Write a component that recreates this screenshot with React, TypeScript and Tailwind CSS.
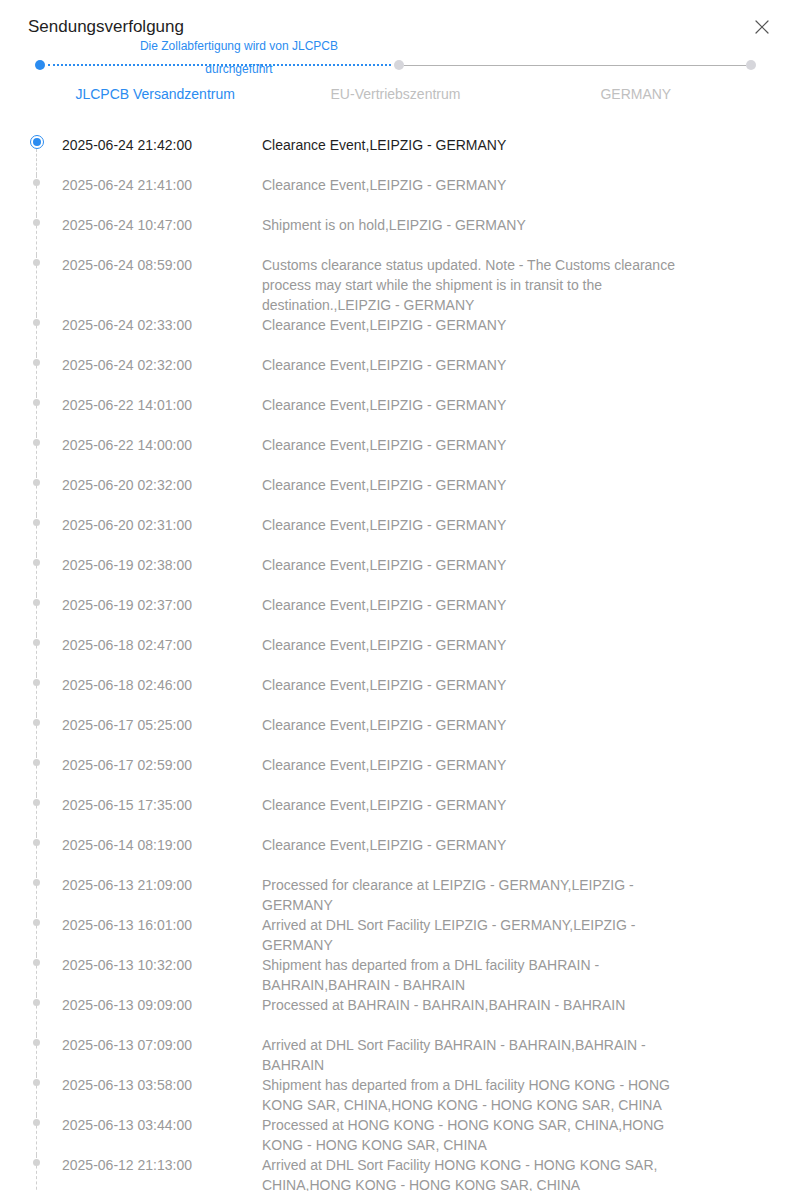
import { X } from 'lucide-react';

interface TrackEvent {
  time: string;
  text: string;
}

const events: TrackEvent[] = [
  { time: '2025-06-24 21:42:00', text: 'Clearance Event,LEIPZIG - GERMANY' },
  { time: '2025-06-24 21:41:00', text: 'Clearance Event,LEIPZIG - GERMANY' },
  { time: '2025-06-24 10:47:00', text: 'Shipment is on hold,LEIPZIG - GERMANY' },
  {
    time: '2025-06-24 08:59:00',
    text: 'Customs clearance status updated. Note - The Customs clearance process may start while the shipment is in transit to the destination.,LEIPZIG - GERMANY',
  },
  { time: '2025-06-24 02:33:00', text: 'Clearance Event,LEIPZIG - GERMANY' },
  { time: '2025-06-24 02:32:00', text: 'Clearance Event,LEIPZIG - GERMANY' },
  { time: '2025-06-22 14:01:00', text: 'Clearance Event,LEIPZIG - GERMANY' },
  { time: '2025-06-22 14:00:00', text: 'Clearance Event,LEIPZIG - GERMANY' },
  { time: '2025-06-20 02:32:00', text: 'Clearance Event,LEIPZIG - GERMANY' },
  { time: '2025-06-20 02:31:00', text: 'Clearance Event,LEIPZIG - GERMANY' },
  { time: '2025-06-19 02:38:00', text: 'Clearance Event,LEIPZIG - GERMANY' },
  { time: '2025-06-19 02:37:00', text: 'Clearance Event,LEIPZIG - GERMANY' },
  { time: '2025-06-18 02:47:00', text: 'Clearance Event,LEIPZIG - GERMANY' },
  { time: '2025-06-18 02:46:00', text: 'Clearance Event,LEIPZIG - GERMANY' },
  { time: '2025-06-17 05:25:00', text: 'Clearance Event,LEIPZIG - GERMANY' },
  { time: '2025-06-17 02:59:00', text: 'Clearance Event,LEIPZIG - GERMANY' },
  { time: '2025-06-15 17:35:00', text: 'Clearance Event,LEIPZIG - GERMANY' },
  { time: '2025-06-14 08:19:00', text: 'Clearance Event,LEIPZIG - GERMANY' },
  { time: '2025-06-13 21:09:00', text: 'Processed for clearance at LEIPZIG - GERMANY,LEIPZIG - GERMANY' },
  { time: '2025-06-13 16:01:00', text: 'Arrived at DHL Sort Facility LEIPZIG - GERMANY,LEIPZIG - GERMANY' },
  {
    time: '2025-06-13 10:32:00',
    text: 'Shipment has departed from a DHL facility BAHRAIN - BAHRAIN,BAHRAIN - BAHRAIN',
  },
  { time: '2025-06-13 09:09:00', text: 'Processed at BAHRAIN - BAHRAIN,BAHRAIN - BAHRAIN' },
  { time: '2025-06-13 07:09:00', text: 'Arrived at DHL Sort Facility BAHRAIN - BAHRAIN,BAHRAIN - BAHRAIN' },
  {
    time: '2025-06-13 03:58:00',
    text: 'Shipment has departed from a DHL facility HONG KONG - HONG KONG SAR, CHINA,HONG KONG - HONG KONG SAR, CHINA',
  },
  {
    time: '2025-06-13 03:44:00',
    text: 'Processed at HONG KONG - HONG KONG SAR, CHINA,HONG KONG - HONG KONG SAR, CHINA',
  },
  {
    time: '2025-06-12 21:13:00',
    text: 'Arrived at DHL Sort Facility HONG KONG - HONG KONG SAR, CHINA,HONG KONG - HONG KONG SAR, CHINA',
  },
];

const steps = ['JLCPCB Versandzentrum', 'EU-Vertriebszentrum', 'GERMANY'];

export default function App() {
  return (
    <div className="min-h-screen bg-white px-[28px] pt-[15px] font-['Liberation_Sans',Arial,sans-serif]">
      {/* Header */}
      <div className="flex items-center justify-between h-6">
        <h1 className="text-[17px] leading-6 text-[#1f1f1f]">Sendungsverfolgung</h1>
        <button className="-mr-[10px] text-[#555]">
          <X size={24} strokeWidth={1.2} />
        </button>
      </div>

      {/* Steps */}
      <div className="ml-[7px] w-[721px] mt-[21px]">
        <div className="relative flex items-center h-[10px]">
          <div className="w-[10px] h-[10px] rounded-full bg-[#2b8cf0] shrink-0" />
          <div className="flex-1 border-t-2 border-dotted border-[#2b8cf0] mx-[3px]" />
          <div className="w-[10px] h-[10px] rounded-full bg-[#d6d6db] shrink-0" />
          <div className="flex-1 h-px bg-[#b3b3b3]" />
          <div className="w-[10px] h-[10px] rounded-full bg-[#d6d6db] shrink-0" />
          <div className="absolute left-[204px] top-[-25px] -translate-x-1/2 whitespace-nowrap text-center text-[12px] leading-[23px] text-[#2b8cf0]">
            Die Zollabfertigung wird von JLCPCB
            <br />
            durchgeführt
          </div>
        </div>
        <div className="grid grid-cols-3 mt-[14px] text-sm leading-5">
          {steps.map((s, i) => (
            <div
              key={s}
              className={`text-center ${i === 0 ? 'text-[#2b8cf0]' : 'text-[#c0c0c0]'}`}
            >
              {s}
            </div>
          ))}
        </div>
      </div>

      {/* Timeline */}
      <div className="mt-[31px]">
        {events.map((ev, i) => {
          const active = i === 0;
          return (
            <div key={i} className="flex min-h-[40px] text-sm leading-5">
              <div className="relative w-[34px] shrink-0">
                <div
                  className={`absolute left-[8px] bottom-0 border-l border-dashed border-[#cfcfcf] ${
                    active ? 'top-[14px]' : 'top-0'
                  }`}
                />
                {active ? (
                  <div className="absolute left-[2px] top-0 w-[14px] h-[14px] rounded-full border-[1.5px] border-[#2b8cf0] bg-white flex items-center justify-center">
                    <div className="w-[8px] h-[8px] rounded-full bg-[#2b8cf0]" />
                  </div>
                ) : (
                  <div className="absolute left-[5px] top-[4px] w-[7px] h-[7px] rounded-full bg-[#d3d3d3]" />
                )}
              </div>
              <div className={`w-[200px] shrink-0 ${active ? 'text-[#1f1f1f]' : 'text-[#999]'}`}>
                {ev.time}
              </div>
              <div className={`w-[420px] ${active ? 'text-[#1f1f1f]' : 'text-[#999]'}`}>
                {ev.text}
              </div>
            </div>
          );
        })}
      </div>
    </div>
  );
}
